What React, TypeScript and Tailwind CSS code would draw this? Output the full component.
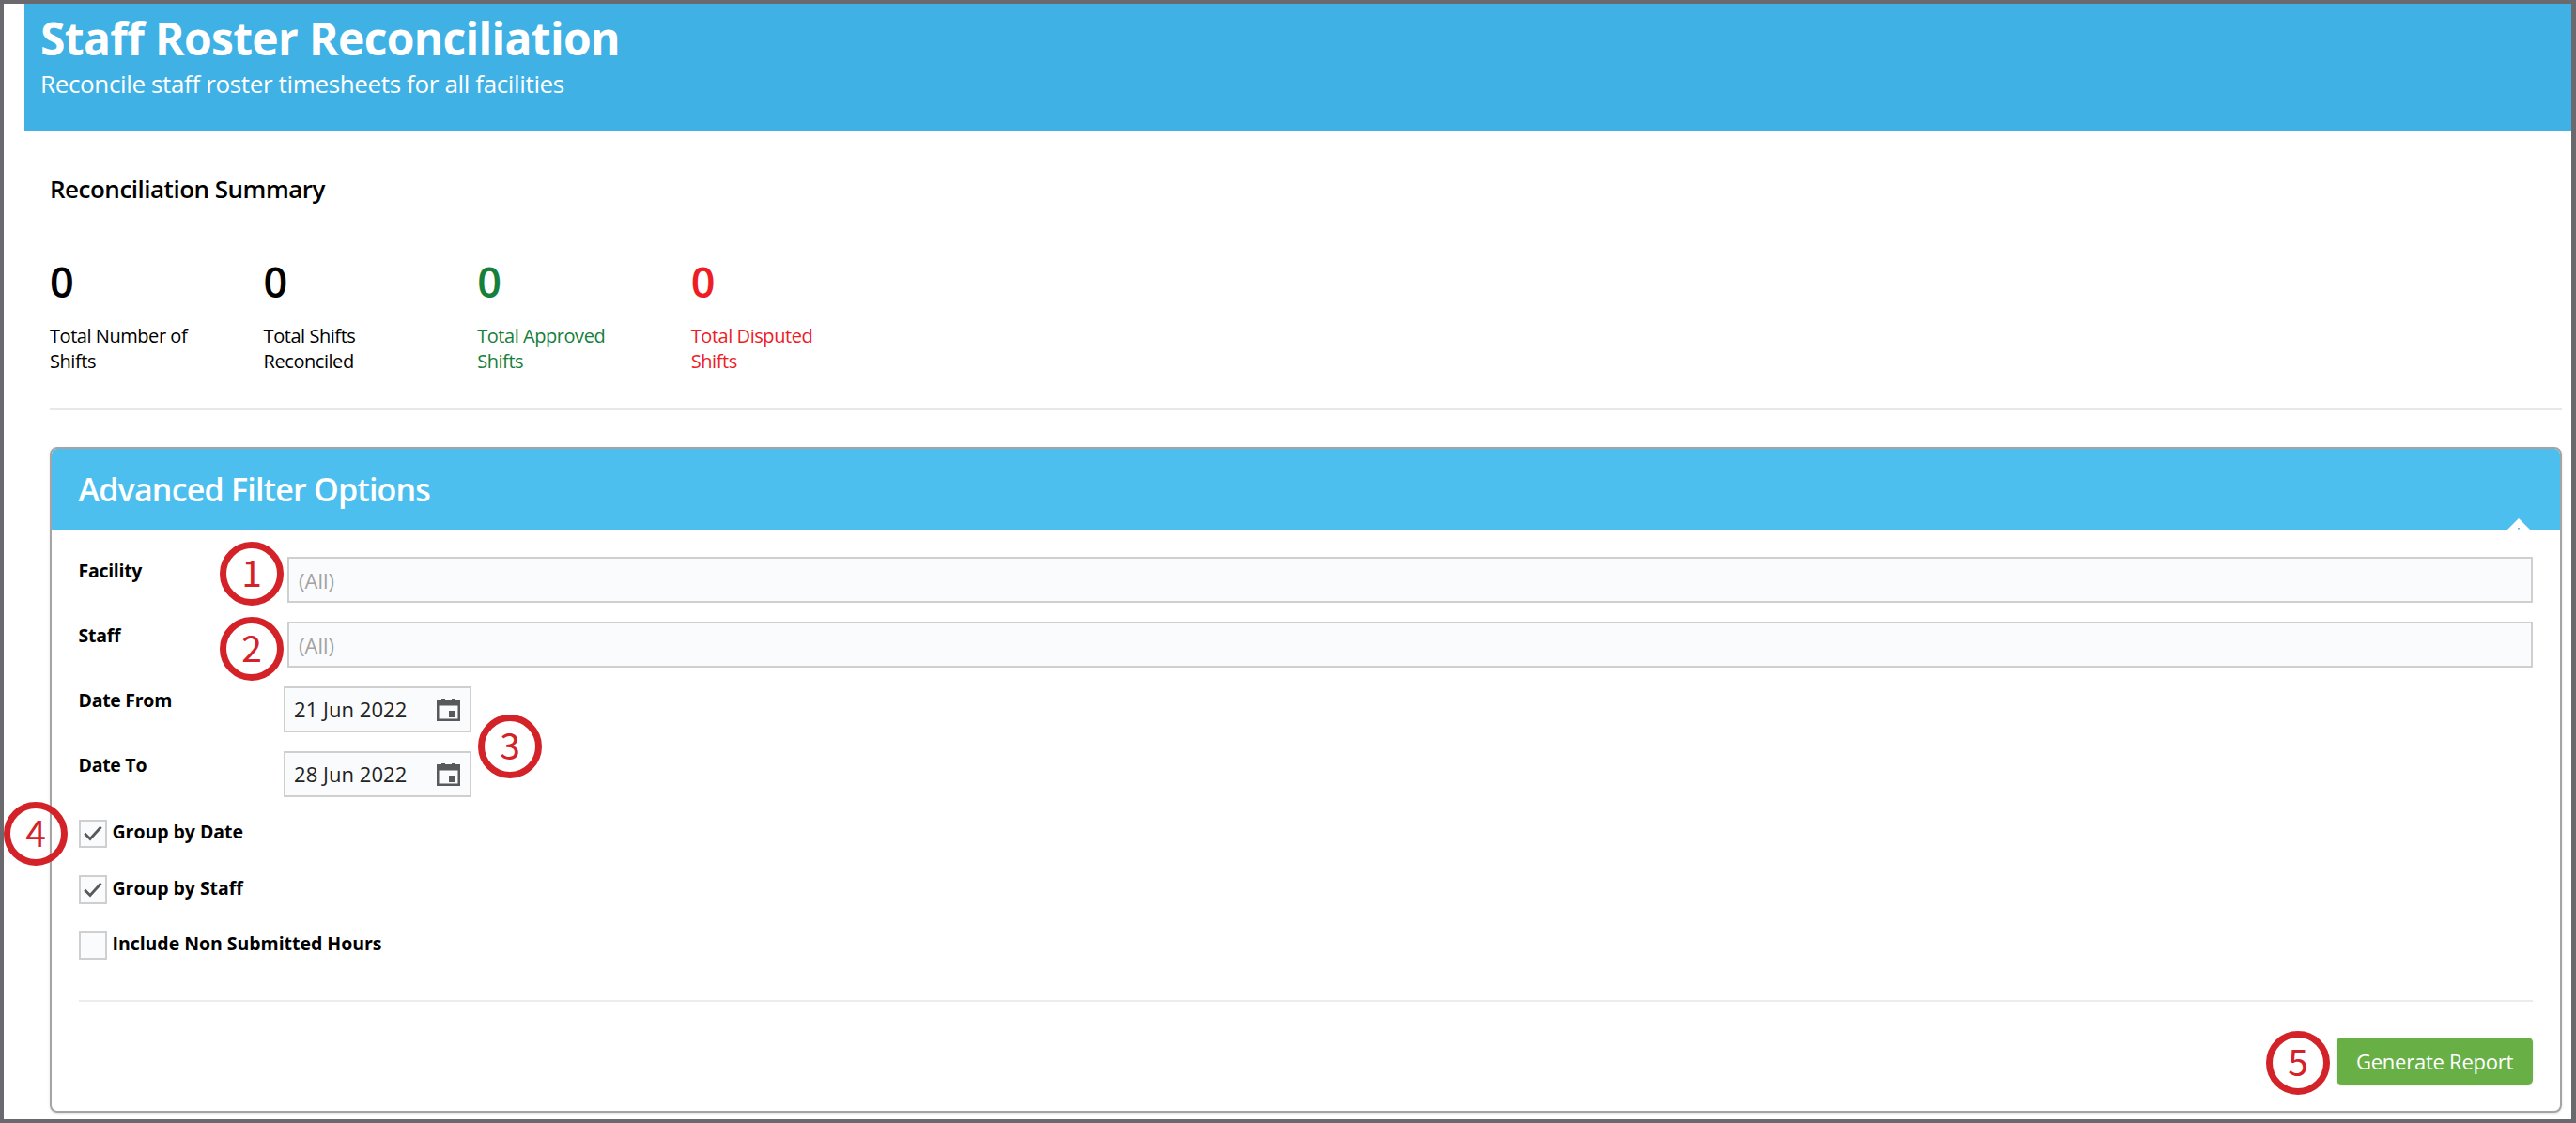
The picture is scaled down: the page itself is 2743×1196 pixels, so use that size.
import React from 'react';

type SummaryItem = {
  value: number;
  label: string;
  className: string;
};

const summary: SummaryItem[] = [
  { value: 0, label: 'Total Number of Shifts', className: 'text-black' },
  { value: 0, label: 'Total Shifts Reconciled', className: 'text-black' },
  { value: 0, label: 'Total Approved Shifts', className: 'text-[#14803c]' },
  { value: 0, label: 'Total Disputed Shifts', className: 'text-[#ee1c25]' },
];

const CalendarIcon: React.FC = () => (
  <svg className="h-6 w-[25px]" viewBox="0 0 25 24" fill="none">
    <path d="M0 1h5V0h4v1h7V0h4v1h5v23H0z" fill="#58595b" />
    <path d="M2.5 7.5h20V21.5h-20z" fill="#fafbfd" />
    <path d="M13 13h7v7h-7z" fill="#58595b" />
  </svg>
);

const FieldRow: React.FC<{ label: string; children: React.ReactNode }> = ({ label, children }) => (
  <div className="flex items-start">
    <label className="w-[218.5px] shrink-0 pt-px text-[19.5px] leading-7 font-bold tracking-[-0.28px]">{label}</label>
    {children}
  </div>
);

const SelectBox: React.FC<{ placeholder: string }> = ({ placeholder }) => (
  <div className="ml-1 flex h-[49.4px] flex-1 items-center border-2 border-[#cfcfcf] bg-[#fafbfd] pt-px pl-[10px] text-[22px] text-[#a3a3a3]">
    {placeholder}
  </div>
);

const DateBox: React.FC<{ value: string }> = ({ value }) => (
  <div className="flex h-[49.4px] w-[200px] items-center justify-between border-2 border-[#cfcfcf] bg-[#fafbfd] pr-[10px] pl-[9px] text-[22px] text-[#222]">
    <span className="tracking-[0.05px]">{value}</span>
    <CalendarIcon />
  </div>
);

const CheckRow: React.FC<{ label: string; checked?: boolean }> = ({ label, checked }) => (
  <div className="flex h-[30.4px] items-center">
    <span className="flex h-[30.4px] w-[30px] items-center justify-center border-2 border-[#cfcfcf] bg-[#fafbfd]">
      {checked && (
        <svg className="h-[17px] w-5" viewBox="0 0 20 16" fill="none">
          <path d="M1.2 8.2L7 14L18.6 1.2" stroke="#58595b" strokeWidth="2.8" />
        </svg>
      )}
    </span>
    <span className="ml-[6px] pb-[3px] text-[19.5px] leading-7 font-bold tracking-[-0.04px]">{label}</span>
  </div>
);

// Numbered callout placed over the page
const Callout: React.FC<{ n: number; className: string }> = ({ n, className }) => (
  <div
    className={`absolute flex h-[68px] w-[68px] items-center justify-center rounded-full border-[7px] border-[#d32228] pb-[5px] font-['Noto_Sans_CJK_SC',sans-serif] text-[39px] leading-none text-[#d32228] ${className}`}
  >
    {n}
  </div>
);

const App: React.FC = () => {
  return (
    <div className="relative h-[1196px] w-[2743px] overflow-hidden border-4 border-r-[5px] border-[#6a696d] bg-white font-['Open_Sans',sans-serif] text-black">
      <header className="ml-[22px] h-[134.5px] bg-[#40b1e5] pt-[9px] pl-[17px] text-white">
        <h1 className="text-[48px] leading-[56px] font-bold tracking-[-0.67px]">Staff Roster Reconciliation</h1>
        <p className="mt-[2px] text-[26px] leading-9 tracking-[-0.36px]">Reconcile staff roster timesheets for all facilities</p>
      </header>

      <main className="pr-[10px] pl-[49px]">
        <h2 className="pt-[44px] text-[26px] leading-9 font-semibold tracking-[-0.5px]">Reconciliation Summary</h2>

        <div className="mt-[51.5px] flex">
          {summary.map((item) => (
            <div key={item.label} className={`w-[227.6px] ${item.className}`}>
              <div className="text-[45px] leading-[60px] font-semibold">{item.value}</div>
              <div className="mt-[15px] w-[160px] text-[20px] leading-[26.7px] tracking-[-0.45px]">{item.label}</div>
            </div>
          ))}
        </div>

        <hr className="mt-[36.5px] border-t-2 border-[#e8e8e8]" />

        <section className="mt-[39px] overflow-hidden rounded-[8px] border-2 border-[#a5a3a3] shadow-sm">
          <div className="flex h-[86px] items-center justify-between bg-[#4dbfef] pl-[28.5px] text-white">
            <h3 className="pt-px text-[34px] leading-[48px] font-semibold tracking-[-0.8px]">Advanced Filter Options</h3>
            <svg className="mr-8 h-3 w-6 self-end" viewBox="0 0 24 12">
              <path d="M12 0L24 12H0z" fill="#fff" />
              <path d="M11 10h2v1.5h-2z" fill="#4dbfef" />
            </svg>
          </div>

          <div className="pt-[29px] pr-[29px] pb-[28px] pl-[28.5px]">
            <div className="flex flex-col gap-[19.6px]">
              <FieldRow label="Facility">
                <SelectBox placeholder="(All)" />
              </FieldRow>
              <FieldRow label="Staff">
                <SelectBox placeholder="(All)" />
              </FieldRow>
              <FieldRow label="Date From">
                <DateBox value="21 Jun 2022" />
              </FieldRow>
              <FieldRow label="Date To">
                <DateBox value="28 Jun 2022" />
              </FieldRow>
            </div>

            <div className="mt-[23.5px] flex flex-col gap-[29px]">
              <CheckRow label="Group by Date" checked />
              <CheckRow label="Group by Staff" checked />
              <CheckRow label="Include Non Submitted Hours" />
            </div>

            <hr className="mt-[43px] border-t-2 border-[#ececec]" />

            <div className="mt-[38px] flex justify-end">
              <button className="h-[50px] w-[209px] rounded-[5px] bg-[#68b045] pt-px text-[22px] tracking-[-0.25px] text-white shadow-sm">
                Generate Report
              </button>
            </div>
          </div>
        </section>
      </main>

      <Callout n={1} className="top-[573px] left-[230px]" />
      <Callout n={2} className="top-[653px] left-[230px]" />
      <Callout n={3} className="top-[757px] left-[505px]" />
      <Callout n={4} className="top-[850px] left-[0px]" />
      <Callout n={5} className="top-[1094px] left-[2409px]" />
    </div>
  );
};

export default App;
